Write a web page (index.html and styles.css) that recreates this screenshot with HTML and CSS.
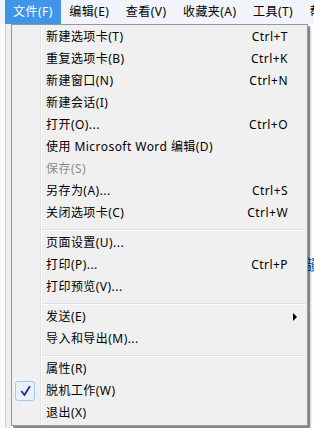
FILE: index.html
```html
<!DOCTYPE html>
<html lang="zh-CN">

<head>
  <meta charset="UTF-8">
  <meta name="viewport" content="width=device-width, initial-scale=1.0">
  <title>文件菜单</title>
  <link rel="stylesheet" href="styles.css">
</head>

<body>
  <nav class="menubar">
    <div class="menubar__grip"></div>
    <div class="menubar__item menubar__item--open">文件(F)</div>
    <div class="menubar__item">编辑(E)</div>
    <div class="menubar__item">查看(V)</div>
    <div class="menubar__item">收藏夹(A)</div>
    <div class="menubar__item">工具(T)</div>
    <div class="menubar__item">帮助(H)</div>
  </nav>

  <div class="page">
    <div class="page__side"></div>
    <div class="page__content">
      <span class="page__link">韻</span>
    </div>
  </div>

  <!-- dropdown of 文件(F), lies over the page -->
  <ul class="menu">
    <li class="menu__item"><span></span><span>新建选项卡(T)</span><span>Ctrl+T</span><span></span></li>
    <li class="menu__item"><span></span><span>重复选项卡(B)</span><span>Ctrl+K</span><span></span></li>
    <li class="menu__item"><span></span><span>新建窗口(N)</span><span>Ctrl+N</span><span></span></li>
    <li class="menu__item"><span></span><span>新建会话(I)</span><span></span><span></span></li>
    <li class="menu__item"><span></span><span>打开(O)...</span><span>Ctrl+O</span><span></span></li>
    <li class="menu__item"><span></span><span>使用 Microsoft Word 编辑(D)</span><span></span><span></span></li>
    <li class="menu__item menu__item--disabled"><span></span><span>保存(S)</span><span></span><span></span></li>
    <li class="menu__item"><span></span><span>另存为(A)...</span><span>Ctrl+S</span><span></span></li>
    <li class="menu__item"><span></span><span>关闭选项卡(C)</span><span>Ctrl+W</span><span></span></li>
    <li class="menu__sep"></li>
    <li class="menu__item"><span></span><span>页面设置(U)...</span><span></span><span></span></li>
    <li class="menu__item"><span></span><span>打印(P)...</span><span>Ctrl+P</span><span></span></li>
    <li class="menu__item"><span></span><span>打印预览(V)...</span><span></span><span></span></li>
    <li class="menu__sep"></li>
    <li class="menu__item"><span></span><span>发送(E)</span><span></span><span class="menu__arrow"></span></li>
    <li class="menu__item"><span></span><span>导入和导出(M)...</span><span></span><span></span></li>
    <li class="menu__sep"></li>
    <li class="menu__item"><span></span><span>属性(R)</span><span></span><span></span></li>
    <li class="menu__item">
      <span class="menu__check">
        <svg width="20" height="20" viewBox="0 0 20 20">
          <path d="M5.5 10.6 L7.2 9.6 L9.2 12.6 L14.2 4.8 L15.8 5.6 L9.6 15.6 Z" fill="#1e2f8f" />
        </svg>
      </span>
      <span>脱机工作(W)</span><span></span><span></span>
    </li>
    <li class="menu__item"><span></span><span>退出(X)</span><span></span><span></span></li>
  </ul>
</body>

</html>
```

FILE: styles.css
```css
* {
  box-sizing: border-box;
}

html,
body {
  margin: 0;
  height: 100%;
  overflow: hidden;
}

body {
  font-family: "Noto Sans", "Noto Sans CJK SC", sans-serif;
  font-size: 12px;
  letter-spacing: .45px;
  color: #000;
  background: #fff;
}

.menubar {
  display: flex;
  height: 24px;
  background: #f1f5fb;
  white-space: nowrap;
}

.menubar__grip {
  width: 6px;
  margin-right: 5px;
  background-image: repeating-linear-gradient(#a9a9a9 0 2px, transparent 2px 4px);
  background-size: 2px 100%;
  background-position: 3px 1px;
  background-repeat: no-repeat;
}

.menubar__item {
  display: flex;
  align-items: center;
  padding: 0 8.5px 0 8px;
  line-height: 24px;
}

.menubar__item--open {
  background: #3f95e8;
  color: #fff;
}

.page {
  display: flex;
  height: calc(100% - 24px);
}

.page__side {
  width: 11px;
  background: linear-gradient(to right, #f9f9f9 5px, #cfcfcf 5px 6px, #eeeeee 6px);
}

.page__content {
  flex: 1;
  padding-top: 229px;
  text-align: right;
}

.page__link {
  display: inline-block;
  margin-right: -6px;
  font-family: "Noto Sans CJK SC", sans-serif;
  font-size: 15px;
  color: #0b5cb8;
}

.menu {
  position: absolute;
  top: 24px;
  left: 11px;
  width: 297px;
  margin: 0;
  padding: 1px 0;
  list-style: none;
  border: 1px solid #979797;
  background: linear-gradient(to right, #f0f0f0 28px, #e2e3e3 28px 29px, #fff 29px 30px, #f0f0f0 30px);
  box-shadow: 2px 2px 0 rgba(0, 0, 0, .35), 3px 3px 2px rgba(0, 0, 0, .2);
}

.menu__item {
  display: grid;
  grid-template-columns: 34px 1fr auto 19px;
  align-items: center;
  height: 22px;
  line-height: 22px;
  white-space: nowrap;
}

.menu__item--disabled {
  color: #8d8d8d;
}

.menu__check {
  display: block;
  width: 20px;
  height: 20px;
  margin-left: 3px;
  background: #e9f0fa;
  border: 1px solid #a9c6ec;
  border-radius: 3px;
}

.menu__check svg {
  display: block;
  margin: -1px;
}

.menu__arrow {
  justify-self: start;
  width: 0;
  height: 0;
  margin-left: 5px;
  border-top: 4px solid transparent;
  border-bottom: 4px solid transparent;
  border-left: 4px solid #000;
}

.menu__sep {
  height: 8px;
  margin: 0 1px 0 30px;
  background: linear-gradient(transparent 5px, #e0e0e0 5px 6px, #fff 6px 7px, transparent 7px);
}
```
